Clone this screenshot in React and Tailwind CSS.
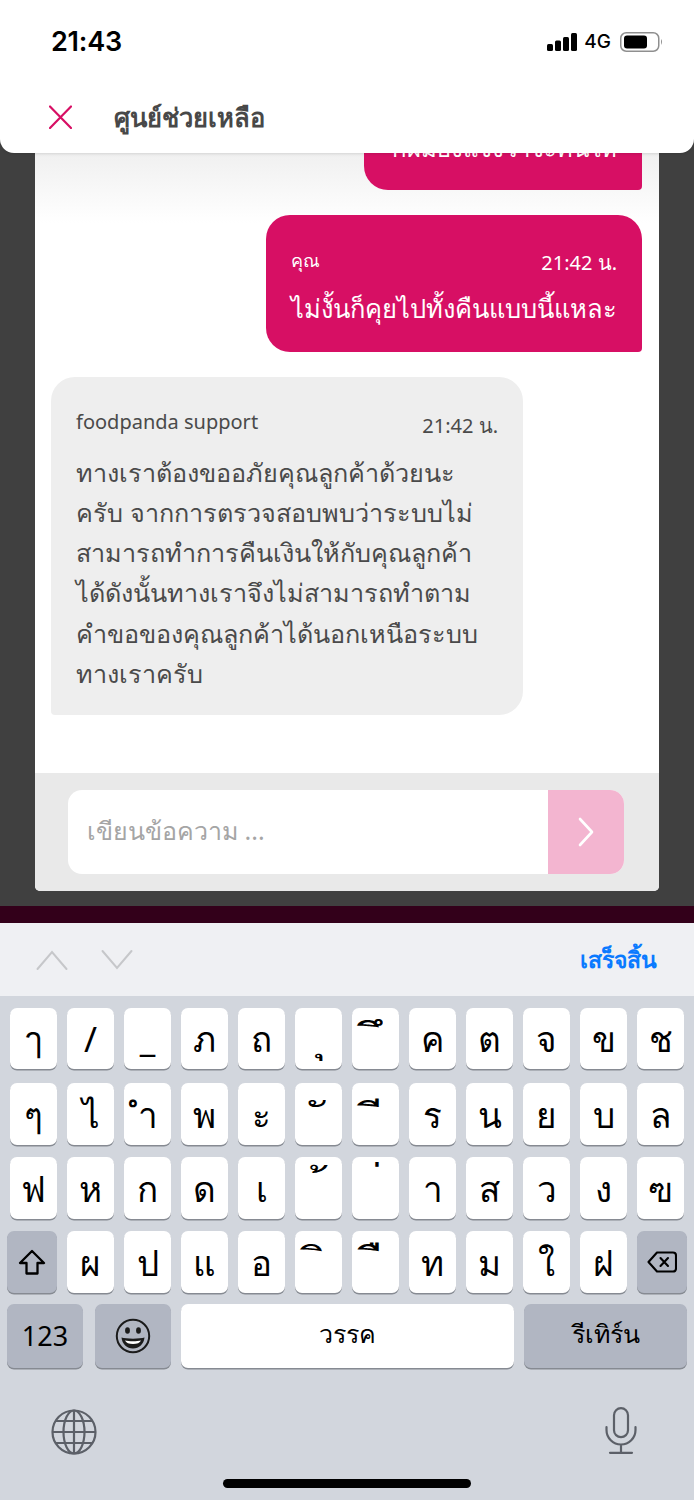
const row1 = ["ๅ", "/", "_", "ภ", "ถ", "\u00A0ุ", "\u00A0ึ", "ค", "ต", "จ", "ข", "ช"];
const row2 = ["ๆ", "ไ", "ำ", "พ", "ะ", "\u00A0ั", "\u00A0ี", "ร", "น", "ย", "บ", "ล"];
const row3 = ["ฟ", "ห", "ก", "ด", "เ", "\u00A0้", "\u00A0่", "า", "ส", "ว", "ง", "ฃ"];
const row4 = ["ผ", "ป", "แ", "อ", "\u00A0ิ", "\u00A0ื", "ท", "ม", "ใ", "ฝ"];
const raised = ["\u00A0ึ", "\u00A0่", "\u00A0ิ", "\u00A0ื"];
const lines = [
  "ทางเราต้องขออภัยคุณลูกค้าด้วยนะ",
  "ครับ จากการตรวจสอบพบว่าระบบไม่",
  "สามารถทำการคืนเงินให้กับคุณลูกค้า",
  "ได้ดังนั้นทางเราจึงไม่สามารถทำตาม",
  "คำขอของคุณลูกค้าได้นอกเหนือระบบ",
  "ทางเราครับ",
];

function Key({ label }) {
  const isMark = label.startsWith("\u00A0");
  return (
    <div className={"flex h-full w-[47px] items-center justify-center rounded-[7px] bg-white text-[35px] leading-none text-black shadow-[0_1.5px_0_#868a92] " + (raised.includes(label) ? "pb-[8px]" : "")}>
      <span className={isMark ? "inline-block scale-x-[1.35]" : ""}>{label}</span>
    </div>
  );
}

function GrayKey({ className, children }) {
  return (
    <div className={"flex h-full items-center justify-center rounded-[7px] bg-[#b1b6c2] text-black shadow-[0_1.5px_0_#868a92] " + className}>
      {children}
    </div>
  );
}

export default function App() {
  return (
    <div className="flex h-[1500px] w-[694px] flex-col overflow-hidden bg-[#404040] font-['Noto_Sans',sans-serif]">
      <header className="relative z-10 h-[153px] shrink-0 rounded-b-[14px] bg-white shadow-[0_1px_3px_rgba(0,0,0,0.12)]">
        <div className="flex h-[83px] items-center justify-between pl-[51px] pr-[30px]">
          <span className="font-['Inter',sans-serif] text-[27px] font-semibold leading-none tracking-[-0.2px] text-black">21:43</span>
          <div className="flex items-center">
            <svg width="32" height="20" viewBox="0 0 32 20" className="mr-[6px]" fill="#000">
              <rect x="1" y="12" width="6" height="7" rx="1.5" />
              <rect x="9" y="8.5" width="6" height="10.5" rx="1.5" />
              <rect x="17" y="5" width="6" height="14" rx="1.5" />
              <rect x="25" y="1" width="6" height="18" rx="1.5" />
            </svg>
            <span className="font-['Inter',sans-serif] text-[19px] font-medium leading-none text-black">4G</span>
            <svg width="44" height="20" viewBox="0 0 44 20" className="ml-[9px]">
              <rect x="0.75" y="0.75" width="38" height="18.5" rx="5.5" fill="none" stroke="#8f8f8f" strokeWidth="1.5" />
              <rect x="4" y="3.5" width="23" height="13" rx="3" fill="#000" />
              <path d="M41 7 Q43 9.5 41 13 Z" fill="#8f8f8f" />
            </svg>
          </div>
        </div>
        <div className="flex items-center pl-[49px] pt-[17px]">
          <svg width="23" height="24" viewBox="0 0 23 24" fill="none" stroke="#d70f64" strokeWidth="2.2" strokeLinecap="round">
            <path d="M1 1.5 22 23M22 1.5 1 23" />
          </svg>
          <h1 className="ml-[42px] text-[25.5px] font-bold leading-[34px] text-[#484848]">ศูนย์ช่วยเหลือ</h1>
        </div>
      </header>

      <main className="h-[753px] shrink-0 px-[35px] pb-[15px]">
        <div className="flex h-full flex-col overflow-hidden rounded-b-[5px] bg-white">
          <section className="flex min-h-0 flex-1 flex-col justify-end gap-[25px] overflow-hidden bg-[linear-gradient(#f0f0f0,#fff_70px)] pb-[58px] pl-[16px] pr-[17px]">
            <div className="ml-auto w-[278px] shrink-0 rounded-[24px] rounded-br-[4px] bg-[#d70f64] px-[25px] pb-[22px] pt-[24px] text-white">
              <p className="whitespace-nowrap text-right text-[24px] leading-[40px]">ก็ผมยังแจ้งว่าจะคืนให้</p>
            </div>
            <div className="ml-auto w-[376px] shrink-0 rounded-[24px] rounded-br-[4px] bg-[#d70f64] px-[25px] pb-[24px] pt-[30px] text-white">
              <div className="flex items-start justify-between">
                <span className="text-[18px] leading-[30px]">คุณ</span>
                <span className="mt-[3px] text-[20px] leading-[30px]">21:42 น.</span>
              </div>
              <p className="mt-[10px] whitespace-nowrap text-[25.5px] leading-[40px]">ไม่งั้นก็คุยไปทั้งคืนแบบนี้แหละ</p>
            </div>
            <div className="w-[472px] shrink-0 rounded-[24px] rounded-bl-[4px] bg-[#eeeeee] px-[25px] pb-[22px] pt-[30px] text-[#4a4a4a]">
              <div className="flex items-start justify-between">
                <span className="text-[20px] leading-[30px]">foodpanda support</span>
                <span className="mt-[4px] text-[20px] leading-[30px]">21:42 น.</span>
              </div>
              <div className="mt-[11px] text-[25.2px] leading-[40.2px]">
                {lines.map((l) => (
                  <p key={l} className="whitespace-nowrap">{l}</p>
                ))}
              </div>
            </div>
          </section>
          <footer className="h-[118px] shrink-0 bg-[#e9e9e9] pl-[33px] pr-[35px] pt-[17px]">
            <div className="flex h-[84px] overflow-hidden rounded-[14px] bg-white">
              <div className="flex flex-1 items-center pb-[2px] pl-[19px] text-[25px] text-[#a5a5a5]">เขียนข้อความ ...</div>
              <div className="flex w-[76px] items-center justify-center bg-[#f3b5d0]">
                <svg width="16" height="30" viewBox="0 0 16 30" fill="none" stroke="#fff" strokeWidth="2.6" strokeLinecap="round" strokeLinejoin="round">
                  <path d="M2 2 14 15 2 28" />
                </svg>
              </div>
            </div>
          </footer>
        </div>
      </main>

      <div className="h-[17px] shrink-0 bg-[#33001a]" />

      <div className="flex h-[73px] shrink-0 items-center justify-between bg-[#eff0f3] pl-[36px] pr-[37px]">
        <div className="flex gap-[33px]">
          <svg width="32" height="22" viewBox="0 0 32 22" fill="none" stroke="#c6c7ca" strokeWidth="2" strokeLinecap="round">
            <path d="M1.5 20 16 3 30.5 20" />
          </svg>
          <svg width="32" height="22" viewBox="0 0 32 22" fill="none" stroke="#c6c7ca" strokeWidth="2" strokeLinecap="round">
            <path d="M1.5 2 16 19 30.5 2" />
          </svg>
        </div>
        <span className="text-[23px] font-bold text-[#0a7aff]">เสร็จสิ้น</span>
      </div>

      <div className="flex-1 bg-[#d2d6dd] pt-[12px]">
        <div className="flex h-[61px] gap-[10px] pl-[10px]">
          {row1.map((k) => <Key key={k} label={k} />)}
        </div>
        <div className="mt-[14px] flex h-[62px] gap-[10px] pl-[10px]">
          {row2.map((k) => <Key key={k} label={k} />)}
        </div>
        <div className="mt-[12px] flex h-[62px] gap-[10px] pl-[10px]">
          {row3.map((k) => <Key key={k} label={k} />)}
        </div>
        <div className="mt-[12px] flex h-[62px] gap-[10px] pl-[7px]">
          <GrayKey className="w-[50px]">
            <svg width="28" height="27" viewBox="0 0 28 27" fill="none" stroke="#000" strokeWidth="2.3" strokeLinejoin="round">
              <path d="M14 2 26 14H19.5V24.5H8.5V14H2Z" />
            </svg>
          </GrayKey>
          {row4.map((k) => <Key key={k} label={k} />)}
          <GrayKey className="w-[50px]">
            <svg width="30" height="22" viewBox="0 0 30 22" fill="none" stroke="#000" strokeWidth="2.1" strokeLinejoin="round" strokeLinecap="round">
              <path d="M10 1.5H26a3 3 0 0 1 3 3v13a3 3 0 0 1-3 3H10L1.5 11Z" />
              <path d="M13.5 7 21 15M21 7 13.5 15" />
            </svg>
          </GrayKey>
        </div>
        <div className="mt-[11px] flex h-[64px] pl-[7px]">
          <GrayKey className="w-[76px] text-[27px]">123</GrayKey>
          <GrayKey className="ml-[12px] w-[76px]">
            <svg width="36" height="36" viewBox="0 0 36 36">
              <circle cx="18" cy="18" r="16.2" fill="none" stroke="#1b1b1b" strokeWidth="2" />
              <ellipse cx="12.5" cy="12.5" rx="2.4" ry="3.2" fill="#1b1b1b" />
              <ellipse cx="23.5" cy="12.5" rx="2.4" ry="3.2" fill="#1b1b1b" />
              <path d="M6.5 19.5C11 21 25 21 29.5 19.5 29 26 24 30.5 18 30.5S7 26 6.5 19.5Z" fill="#1b1b1b" />
              <path d="M10 22.5C14 23.5 22 23.5 26 22.5 25 25 22 26 18 26S11 25 10 22.5Z" fill="#fff" />
            </svg>
          </GrayKey>
          <div className="ml-[10px] flex h-full w-[333px] items-center justify-center rounded-[7px] bg-white pb-[4px] text-[25px] text-black shadow-[0_1.5px_0_#868a92]">วรรค</div>
          <GrayKey className="ml-[10px] w-[163px] pb-[4px] text-[25px]">รีเทิร์น</GrayKey>
        </div>
        <div className="flex justify-between pl-[51px] pr-[57px] pt-[39px]">
          <svg width="46" height="46" viewBox="0 0 46 46" fill="none" stroke="#5c6068" strokeWidth="2.2" className="mt-[2px]">
            <circle cx="23" cy="23" r="21.5" />
            <ellipse cx="23" cy="23" rx="10.5" ry="21.5" />
            <path d="M23 1.5V44.5M1.5 23H44.5M4.5 12H41.5M4.5 34H41.5" />
          </svg>
          <svg width="32" height="47" viewBox="0 0 32 47" fill="none" stroke="#5c6068" strokeWidth="2.2" strokeLinecap="round">
            <rect x="9" y="1.2" width="14" height="29" rx="7" />
            <path d="M1.5 20V23a14.5 14.5 0 0 0 29 0V20M16 37.5V45.5M5 45.8H27" />
          </svg>
        </div>
        <div className="flex justify-center pt-[24px] pr-[1px]">
          <div className="h-[9px] w-[248px] rounded-full bg-black" />
        </div>
      </div>
    </div>
  );
}
